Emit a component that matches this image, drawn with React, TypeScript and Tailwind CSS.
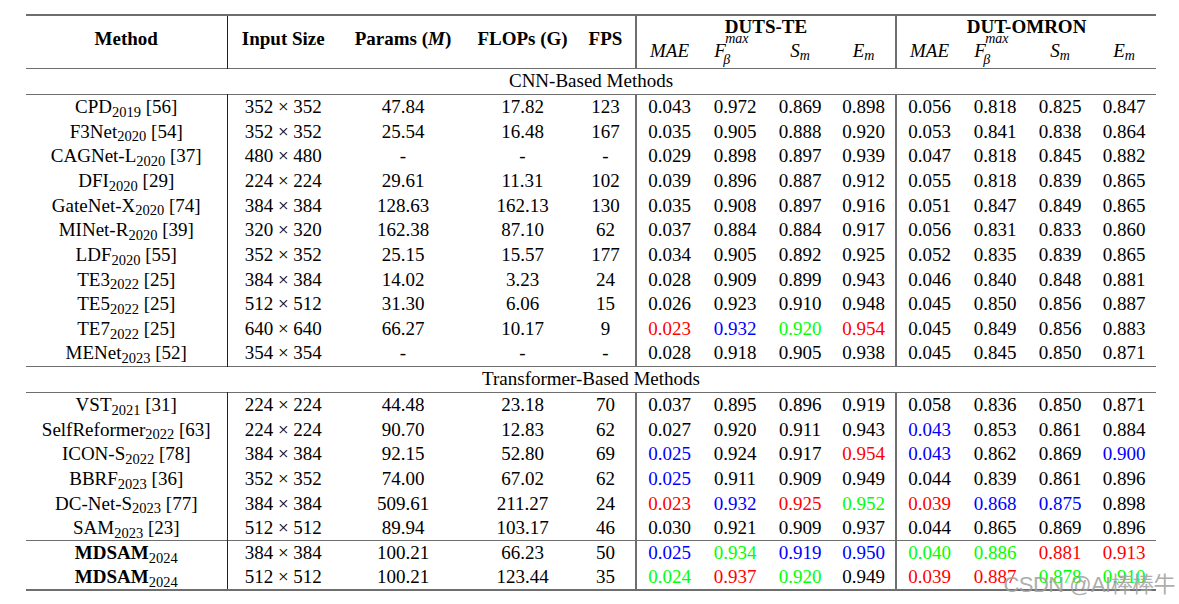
import React from 'react';

type Row = {
    name: string;
    year: string;
    ref?: string;
    bold?: boolean;
    size: string;
    params: string;
    flops: string;
    fps: string;
    duts: string[];
    omron: string[];
};

// "r:" red, "b:" blue, "g:" green
const tone = (v: string) => {
    if (v.startsWith('r:')) return { text: v.slice(2), cls: 'text-[#ff0000]' };
    if (v.startsWith('b:')) return { text: v.slice(2), cls: 'text-[#0000ff]' };
    if (v.startsWith('g:')) return { text: v.slice(2), cls: 'text-[#00ff00]' };
    return { text: v, cls: 'text-black' };
};

const cnnRows: Row[] = [
    { name: 'CPD', year: '2019', ref: '56', size: '352 × 352', params: '47.84', flops: '17.82', fps: '123', duts: ['0.043', '0.972', '0.869', '0.898'], omron: ['0.056', '0.818', '0.825', '0.847'] },
    { name: 'F3Net', year: '2020', ref: '54', size: '352 × 352', params: '25.54', flops: '16.48', fps: '167', duts: ['0.035', '0.905', '0.888', '0.920'], omron: ['0.053', '0.841', '0.838', '0.864'] },
    { name: 'CAGNet-L', year: '2020', ref: '37', size: '480 × 480', params: '-', flops: '-', fps: '-', duts: ['0.029', '0.898', '0.897', '0.939'], omron: ['0.047', '0.818', '0.845', '0.882'] },
    { name: 'DFI', year: '2020', ref: '29', size: '224 × 224', params: '29.61', flops: '11.31', fps: '102', duts: ['0.039', '0.896', '0.887', '0.912'], omron: ['0.055', '0.818', '0.839', '0.865'] },
    { name: 'GateNet-X', year: '2020', ref: '74', size: '384 × 384', params: '128.63', flops: '162.13', fps: '130', duts: ['0.035', '0.908', '0.897', '0.916'], omron: ['0.051', '0.847', '0.849', '0.865'] },
    { name: 'MINet-R', year: '2020', ref: '39', size: '320 × 320', params: '162.38', flops: '87.10', fps: '62', duts: ['0.037', '0.884', '0.884', '0.917'], omron: ['0.056', '0.831', '0.833', '0.860'] },
    { name: 'LDF', year: '2020', ref: '55', size: '352 × 352', params: '25.15', flops: '15.57', fps: '177', duts: ['0.034', '0.905', '0.892', '0.925'], omron: ['0.052', '0.835', '0.839', '0.865'] },
    { name: 'TE3', year: '2022', ref: '25', size: '384 × 384', params: '14.02', flops: '3.23', fps: '24', duts: ['0.028', '0.909', '0.899', '0.943'], omron: ['0.046', '0.840', '0.848', '0.881'] },
    { name: 'TE5', year: '2022', ref: '25', size: '512 × 512', params: '31.30', flops: '6.06', fps: '15', duts: ['0.026', '0.923', '0.910', '0.948'], omron: ['0.045', '0.850', '0.856', '0.887'] },
    { name: 'TE7', year: '2022', ref: '25', size: '640 × 640', params: '66.27', flops: '10.17', fps: '9', duts: ['r:0.023', 'b:0.932', 'g:0.920', 'r:0.954'], omron: ['0.045', '0.849', '0.856', '0.883'] },
    { name: 'MENet', year: '2023', ref: '52', size: '354 × 354', params: '-', flops: '-', fps: '-', duts: ['0.028', '0.918', '0.905', '0.938'], omron: ['0.045', '0.845', '0.850', '0.871'] },
];

const transformerRows: Row[] = [
    { name: 'VST', year: '2021', ref: '31', size: '224 × 224', params: '44.48', flops: '23.18', fps: '70', duts: ['0.037', '0.895', '0.896', '0.919'], omron: ['0.058', '0.836', '0.850', '0.871'] },
    { name: 'SelfReformer', year: '2022', ref: '63', size: '224 × 224', params: '90.70', flops: '12.83', fps: '62', duts: ['0.027', '0.920', '0.911', '0.943'], omron: ['b:0.043', '0.853', '0.861', '0.884'] },
    { name: 'ICON-S', year: '2022', ref: '78', size: '384 × 384', params: '92.15', flops: '52.80', fps: '69', duts: ['b:0.025', '0.924', '0.917', 'r:0.954'], omron: ['b:0.043', '0.862', '0.869', 'b:0.900'] },
    { name: 'BBRF', year: '2023', ref: '36', size: '352 × 352', params: '74.00', flops: '67.02', fps: '62', duts: ['b:0.025', '0.911', '0.909', '0.949'], omron: ['0.044', '0.839', '0.861', '0.896'] },
    { name: 'DC-Net-S', year: '2023', ref: '77', size: '384 × 384', params: '509.61', flops: '211.27', fps: '24', duts: ['r:0.023', 'b:0.932', 'r:0.925', 'g:0.952'], omron: ['r:0.039', 'b:0.868', 'b:0.875', '0.898'] },
    { name: 'SAM', year: '2023', ref: '23', size: '512 × 512', params: '89.94', flops: '103.17', fps: '46', duts: ['0.030', '0.921', '0.909', '0.937'], omron: ['0.044', '0.865', '0.869', '0.896'] },
];

const oursRows: Row[] = [
    { name: 'MDSAM', year: '2024', bold: true, size: '384 × 384', params: '100.21', flops: '66.23', fps: '50', duts: ['b:0.025', 'g:0.934', 'b:0.919', 'b:0.950'], omron: ['g:0.040', 'g:0.886', 'r:0.881', 'r:0.913'] },
    { name: 'MDSAM', year: '2024', bold: true, size: '512 × 512', params: '100.21', flops: '123.44', fps: '35', duts: ['g:0.024', 'r:0.937', 'g:0.920', '0.949'], omron: ['r:0.039', 'r:0.887', 'g:0.878', 'g:0.910'] },
];

const DataRow = ({ row, top }: { row: Row; top?: boolean }) => (
    <tr className={`h-[24.7px] ${top ? 'border-t border-[#6e6e6e]' : ''}`}>
        <td className="border-r border-[#222]">
            <span className={row.bold ? 'font-bold' : ''}>{row.name}</span>
            <sub className="text-[14.5px] font-normal">{row.year}</sub>
            {row.ref && <span> [{row.ref}]</span>}
        </td>
        <td>{row.size}</td>
        <td>{row.params}</td>
        <td>{row.flops}</td>
        <td className="border-r-2 border-[#6e6e6e] pr-[2px]">{row.fps}</td>
        {row.duts.map((v, i) => {
            const t = tone(v);
            return (
                <td key={`d${i}`} className={`${t.cls} ${i === 3 ? 'border-r-2 border-[#6e6e6e]' : ''}`}>
                    {t.text}
                </td>
            );
        })}
        {row.omron.map((v, i) => {
            const t = tone(v);
            return (
                <td key={`o${i}`} className={t.cls}>
                    {t.text}
                </td>
            );
        })}
    </tr>
);

const SectionRow = ({ label }: { label: string }) => (
    <tr className="h-[26.5px] border-y border-[#6e6e6e]">
        <td colSpan={13} className="text-center">{label}</td>
    </tr>
);

const Sub = ({ base, sub }: { base: string; sub: string }) => (
    <span className="italic">
        {base}
        <sub className="text-[14px] italic">{sub}</sub>
    </span>
);

const Fbeta = () => (
    <span className="relative inline-block italic pr-[30px]">
        F
        <span className="absolute left-[11px] top-[-8px] text-[14px] leading-none">max</span>
        <span className="absolute left-[9px] top-[13px] text-[14px] leading-none">β</span>
    </span>
);

const App = () => {
    return (
        <div className="relative w-[1179px] h-[604px] bg-white overflow-hidden">
            <div className="pt-[14px] pl-[26px]">
                <table
                    className="w-[1130px] table-fixed border-collapse text-center text-[19px] leading-[22px] text-black"
                    style={{ fontFamily: '"Liberation Serif", "Times New Roman", serif' }}
                >
                    <colgroup>
                        <col className="w-[201px]" />
                        <col className="w-[112px]" />
                        <col className="w-[128px]" />
                        <col className="w-[111px]" />
                        <col className="w-[58px]" />
                        <col className="w-[66px]" />
                        <col className="w-[66px]" />
                        <col className="w-[64px]" />
                        <col className="w-[64px]" />
                        <col className="w-[66px]" />
                        <col className="w-[66px]" />
                        <col className="w-[64px]" />
                        <col className="w-[64px]" />
                    </colgroup>
                    <thead>
                        <tr className="h-[21px] border-t-2 border-[#6e6e6e]">
                            <th rowSpan={2} className="border-r border-[#222] pb-[6px]">Method</th>
                            <th rowSpan={2} className="pb-[6px]">Input Size</th>
                            <th rowSpan={2} className="pb-[6px]">Params (<i>M</i>)</th>
                            <th rowSpan={2} className="pb-[6px]">FLOPs (G)</th>
                            <th rowSpan={2} className="border-r-2 border-[#6e6e6e] pb-[6px] pr-[2px]">FPS</th>
                            <th colSpan={4} className="border-r-2 border-[#6e6e6e]">DUTS-TE</th>
                            <th colSpan={4}>DUT-OMRON</th>
                        </tr>
                        <tr className="h-[30px] font-normal">
                            <td className="italic pb-[4px]">MAE</td>
                            <td className="pb-[4px]"><Fbeta /></td>
                            <td className="pb-[4px]"><Sub base="S" sub="m" /></td>
                            <td className="border-r-2 border-[#6e6e6e] pb-[4px]"><Sub base="E" sub="m" /></td>
                            <td className="italic pb-[4px]">MAE</td>
                            <td className="pb-[4px]"><Fbeta /></td>
                            <td className="pb-[4px]"><Sub base="S" sub="m" /></td>
                            <td className="pb-[4px]"><Sub base="E" sub="m" /></td>
                        </tr>
                    </thead>
                    <tbody>
                        <SectionRow label="CNN-Based Methods" />
                        {cnnRows.map((r, i) => (
                            <DataRow key={`c${i}`} row={r} />
                        ))}
                        <SectionRow label="Transformer-Based Methods" />
                        {transformerRows.map((r, i) => (
                            <DataRow key={`t${i}`} row={r} />
                        ))}
                        {oursRows.map((r, i) => (
                            <DataRow key={`o${i}`} row={r} top={i === 0} />
                        ))}
                        <tr className="h-0 border-t-2 border-[#6e6e6e]">
                            <td colSpan={13} className="p-0"></td>
                        </tr>
                    </tbody>
                </table>
            </div>

            {/* watermark */}
            <div
                className="absolute right-[4px] bottom-[8px] text-[22px] leading-none text-[#a0a0a0] opacity-85 tracking-tight"
                style={{ fontFamily: '"Liberation Sans", "Noto Sans CJK SC", sans-serif' }}
            >
                CSDN @AI棒棒牛
            </div>
        </div>
    );
};

export default App;
